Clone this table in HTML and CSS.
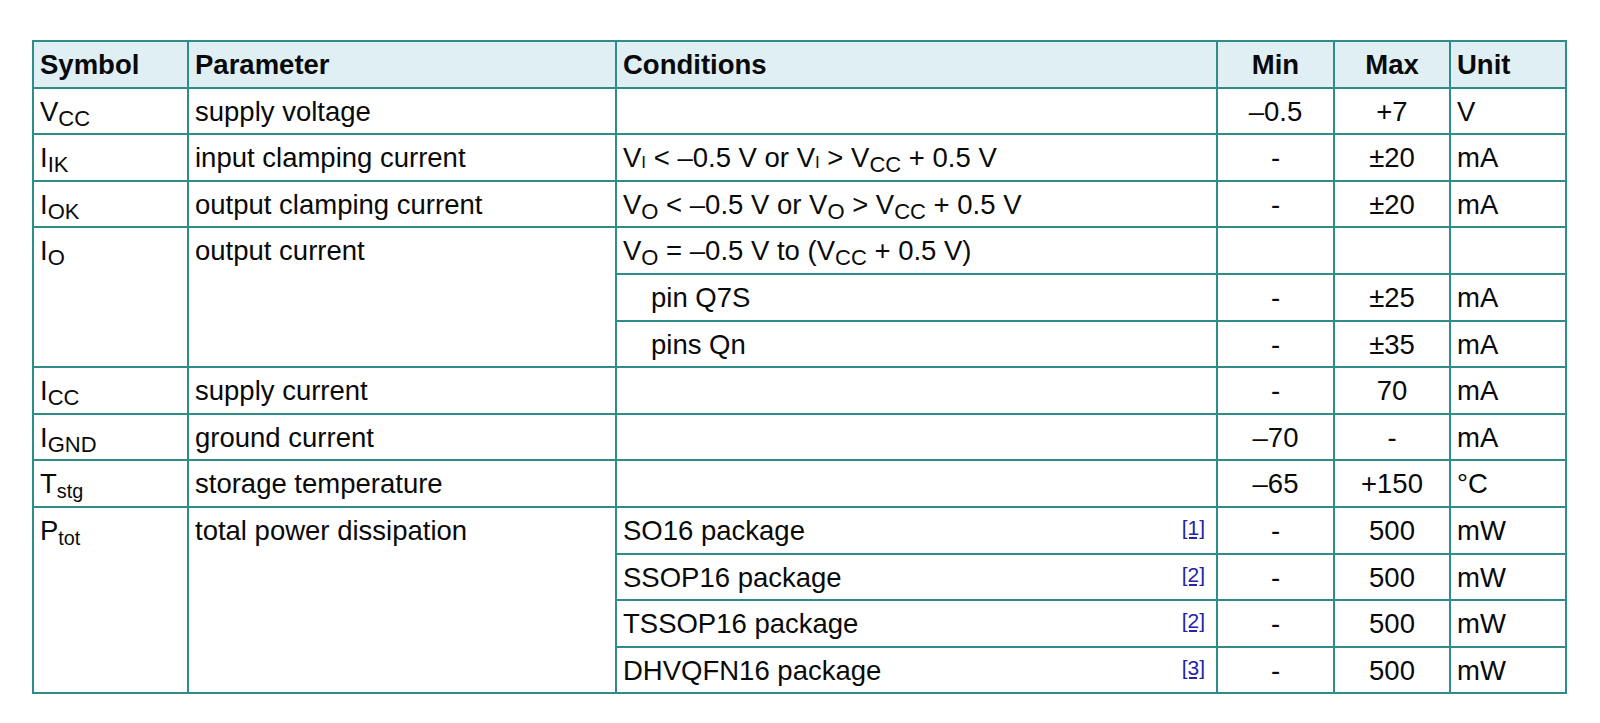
FILE: index.html
```html
<!DOCTYPE html>
<html>
<head>
<meta charset="utf-8">
<link rel="stylesheet" href="styles.css">
</head>
<body>
<div class="page">
<table class="spec">
  <colgroup>
    <col class="c-sym"><col class="c-par"><col class="c-cond"><col class="c-min"><col class="c-max"><col class="c-unit">
  </colgroup>
  <thead>
    <tr class="head">
      <th>Symbol</th><th>Parameter</th><th>Conditions</th><th class="ctr">Min</th><th class="ctr">Max</th><th>Unit</th>
    </tr>
  </thead>
  <tbody>
    <tr>
      <td>V<sub>CC</sub></td><td>supply voltage</td><td></td><td class="ctr">–0.5</td><td class="ctr">+7</td><td>V</td>
    </tr>
    <tr>
      <td>I<sub>IK</sub></td><td>input clamping current</td><td>V<sub class="sm">I</sub> &lt; –0.5 V or V<sub class="sm">I</sub> &gt; V<sub>CC</sub> + 0.5 V</td><td class="ctr">-</td><td class="ctr">±20</td><td>mA</td>
    </tr>
    <tr>
      <td>I<sub>OK</sub></td><td>output clamping current</td><td>V<sub>O</sub> &lt; –0.5 V or V<sub>O</sub> &gt; V<sub>CC</sub> + 0.5 V</td><td class="ctr">-</td><td class="ctr">±20</td><td>mA</td>
    </tr>
    <tr>
      <td rowspan="3">I<sub>O</sub></td><td rowspan="3">output current</td><td>V<sub>O</sub> = –0.5 V to (V<sub>CC</sub> + 0.5 V)</td><td></td><td></td><td></td>
    </tr>
    <tr>
      <td class="indent">pin Q7S</td><td class="ctr">-</td><td class="ctr">±25</td><td>mA</td>
    </tr>
    <tr>
      <td class="indent">pins Qn</td><td class="ctr">-</td><td class="ctr">±35</td><td>mA</td>
    </tr>
    <tr>
      <td>I<sub>CC</sub></td><td>supply current</td><td></td><td class="ctr">-</td><td class="ctr">70</td><td>mA</td>
    </tr>
    <tr>
      <td>I<sub>GND</sub></td><td>ground current</td><td></td><td class="ctr">–70</td><td class="ctr">-</td><td>mA</td>
    </tr>
    <tr>
      <td>T<sub class="lc">stg</sub></td><td>storage temperature</td><td></td><td class="ctr">–65</td><td class="ctr">+150</td><td>°C</td>
    </tr>
    <tr>
      <td rowspan="4">P<sub class="lc">tot</sub></td><td rowspan="4">total power dissipation</td><td>SO16 package<a class="note" href="#n1">[1]</a></td><td class="ctr">-</td><td class="ctr">500</td><td>mW</td>
    </tr>
    <tr>
      <td>SSOP16 package<a class="note" href="#n2">[2]</a></td><td class="ctr">-</td><td class="ctr">500</td><td>mW</td>
    </tr>
    <tr>
      <td>TSSOP16 package<a class="note" href="#n2">[2]</a></td><td class="ctr">-</td><td class="ctr">500</td><td>mW</td>
    </tr>
    <tr>
      <td>DHVQFN16 package<a class="note" href="#n3">[3]</a></td><td class="ctr">-</td><td class="ctr">500</td><td>mW</td>
    </tr>
  </tbody>
</table>
</div>
</body>
</html>
```
FILE: styles.css
```css
html, body {
  margin: 0;
  padding: 0;
  background: #ffffff;
}

.page {
  padding: 40px 0 0 32px;
}

.spec {
  border-collapse: collapse;
  table-layout: fixed;
  width: 1535px;
  font-family: "Liberation Sans", Arial, sans-serif;
  font-size: 27.5px;
  color: #0a0a0a;
}

.c-sym { width: 155px; }
.c-par { width: 428px; }
.c-cond { width: 601px; }
.c-min { width: 117px; }
.c-max { width: 116px; }
.c-unit { width: 116px; }

.spec th,
.spec td {
  border: 2px solid #2e8c89;
  padding: 7px 6px 0 6px;
  height: 46.6px;
  box-sizing: border-box;
  line-height: 31px;
  vertical-align: top;
  text-align: left;
  white-space: nowrap;
}

.spec th {
  font-weight: bold;
  background: #dfeff4;
  padding-top: 7px;
}

.spec .ctr {
  text-align: center;
}

.spec .indent {
  padding-left: 34px;
}

.spec sub {
  font-size: 0.8em;
  vertical-align: -0.22em;
  line-height: 0;
}

.spec sub.sm {
  font-size: 0.62em;
  vertical-align: -0.08em;
}

.spec sub.lc {
  font-size: 0.72em;
  vertical-align: -0.25em;
}

.note {
  float: right;
  font-size: 21px;
  line-height: 21px;
  margin-top: 2px;
  margin-right: 5px;
  color: #2323a8;
  text-decoration: underline;
}
```
